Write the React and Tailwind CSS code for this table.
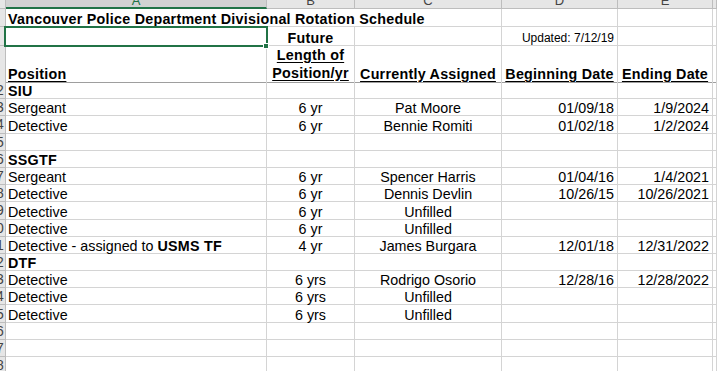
import React from "react";

const COLS = "grid grid-cols-[6px_261px_88px_147px_116px_95px_1fr]";
const BOLD = "font-bold tracking-[0.25px]";

const rows = [
  { n: 12, a: "SIU", bold: true },
  { n: 13, a: "Sergeant", b: "6 yr", c: "Pat Moore", d: "01/09/18", e: "1/9/2024" },
  { n: 14, a: "Detective", b: "6 yr", c: "Bennie Romiti", d: "01/02/18", e: "1/2/2024" },
  { n: 15 },
  { n: 16, a: "SSGTF", bold: true },
  { n: 17, a: "Sergeant", b: "6 yr", c: "Spencer Harris", d: "01/04/16", e: "1/4/2021" },
  { n: 18, a: "Detective", b: "6 yr", c: "Dennis Devlin", d: "10/26/15", e: "10/26/2021" },
  { n: 19, a: "Detective", b: "6 yr", c: "Unfilled" },
  { n: 20, a: "Detective", b: "6 yr", c: "Unfilled" },
  {
    n: 21,
    a: (
      <span>
        Detective - assigned to <b className={BOLD}>USMS TF</b>
      </span>
    ),
    b: "4 yr",
    c: "James Burgara",
    d: "12/01/18",
    e: "12/31/2022",
  },
  { n: 22, a: "DTF", bold: true },
  { n: 23, a: "Detective", b: "6 yrs", c: "Rodrigo Osorio", d: "12/28/16", e: "12/28/2022" },
  { n: 24, a: "Detective", b: "6 yrs", c: "Unfilled" },
  { n: 25, a: "Detective", b: "6 yrs", c: "Unfilled" },
  { n: 26 },
  { n: 27 },
  { n: 28 },
];

const Cell = ({ children, align = "left", className = "" }) => {
  const alignCls =
    align === "center"
      ? "justify-center"
      : align === "right"
      ? "justify-end pr-[3px]"
      : "justify-start pl-[2px]";
  return (
    <div
      className={`flex items-end overflow-visible whitespace-nowrap border-r border-b border-[#d4d4d4] leading-[14px] ${alignCls} ${className}`}
    >
      {children}
    </div>
  );
};

const RowHead = ({ n, className = "" }) => (
  <div
    className={`flex items-center justify-end overflow-hidden bg-[#e6e6e6] border-r border-b border-[#bdbdbd] ${className}`}
  >
    {n && (
      <div className="w-[18px] shrink-0 text-center text-[14px] leading-[16px] text-[#444]">
        {n}
      </div>
    )}
  </div>
);

const ColHead = ({ letter, active }) => (
  <div
    className={`flex justify-center overflow-hidden border-r ${
      active
        ? "bg-[#d2d2d2] border-b-2 border-b-[#217346] border-r-[#bdbdbd] text-[#217346]"
        : "bg-[#e6e6e6] border-b border-b-[#bdbdbd] border-r-[#bdbdbd] text-[#444]"
    }`}
  >
    <span className="block mt-[-6px] text-[13px] leading-[13px]">{letter}</span>
  </div>
);

export default function App() {
  return (
    <div className="relative w-[717px] h-[371px] overflow-hidden bg-white text-black text-[14.3px] font-['Liberation_Sans',Arial,sans-serif]">
      {/* column letters */}
      <div className={`${COLS} h-[9px]`}>
        <div className="bg-[#e6e6e6] border-r border-b border-[#bdbdbd]" />
        <ColHead letter="A" active />
        <ColHead letter="B" />
        <ColHead letter="C" />
        <ColHead letter="D" />
        <ColHead letter="E" />
        <ColHead letter="" />
      </div>

      {/* title */}
      <div className={`${COLS} h-[18px]`}>
        <RowHead />
        <Cell className={`col-span-3 ${BOLD}`}>
          Vancouver Police Department Divisional Rotation Schedule
        </Cell>
        <Cell />
        <Cell />
        <Cell />
      </div>

      <div className={`${COLS} h-[19px]`}>
        <RowHead />
        <Cell />
        <Cell align="center" className={BOLD}>
          Future
        </Cell>
        <Cell />
        <Cell align="right" className="text-[12px]">
          Updated: 7/12/19
        </Cell>
        <Cell />
        <Cell />
      </div>

      {/* header row, frozen pane line below */}
      <div className={`${COLS} h-[36px] ${BOLD}`}>
        <RowHead className="border-b-[#9e9e9e]" />
        <Cell className="border-b-[#9e9e9e] leading-[16px]">
          <span className="underline underline-offset-2">Position</span>
        </Cell>
        <Cell align="center" className="border-b-[#9e9e9e]">
          <div className="text-center leading-[18px] underline underline-offset-2">
            Length of
            <br />
            Position/yr
          </div>
        </Cell>
        <Cell align="center" className="border-b-[#9e9e9e] leading-[16px]">
          <span className="underline underline-offset-2">Currently Assigned</span>
        </Cell>
        <Cell align="center" className="border-b-[#9e9e9e] leading-[16px]">
          <span className="underline underline-offset-2">Beginning Date</span>
        </Cell>
        <Cell align="center" className="border-b-[#9e9e9e] leading-[16px]">
          <span className="underline underline-offset-2">Ending Date</span>
        </Cell>
        <Cell className="border-b-[#9e9e9e]" />
      </div>

      {rows.map((r) => (
        <div key={r.n} className={`${COLS} h-[17.2px]`}>
          <RowHead n={r.n} />
          <Cell className={r.bold ? BOLD : ""}>{r.a}</Cell>
          <Cell align="center">{r.b}</Cell>
          <Cell align="center">{r.c}</Cell>
          <Cell align="right">{r.d}</Cell>
          <Cell align="right">{r.e}</Cell>
          <Cell />
        </div>
      ))}

      {/* active cell selection */}
      <div className="absolute left-[4px] top-[26px] w-[264px] h-[21px] border-2 border-[#217346]" />
      <div className="absolute left-[263px] top-[43px] w-[6px] h-[6px] bg-[#217346] border border-white" />
    </div>
  );
}
